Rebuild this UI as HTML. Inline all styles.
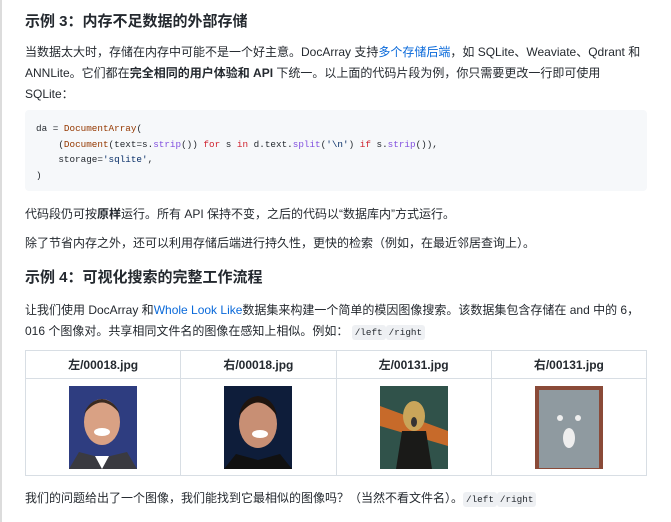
<!DOCTYPE html>
<html><head><meta charset="utf-8"><style>
*{margin:0;padding:0;box-sizing:border-box}
body{width:671px;height:522px;overflow:hidden;background:#fff;font-family:"Liberation Sans","Noto Sans CJK SC",sans-serif;color:#24292f;position:relative}
.bar{position:absolute;left:0;top:0;width:2px;height:522px;background:#dcdcdc}
h2{font-size:15px;font-weight:bold;position:absolute;left:25px;line-height:22px}
p{font-size:12px;line-height:21px;position:absolute;left:25px;white-space:nowrap}
a{color:#0969da;text-decoration:none}
.code{position:absolute;left:25px;top:110px;width:622px;height:81px;background:#f6f8fa;border-radius:4px;font-family:"Liberation Mono",monospace;font-size:9.3px;line-height:15.5px;padding:11px 0 0 11px;white-space:pre;color:#24292f}
.k{color:#cf222e}.f{color:#8250df}.n{color:#953800}.s{color:#0a3069}
code{font-family:"Liberation Mono",monospace;font-size:9.3px;background:#eef0f3;border-radius:3px;padding:2px 3px}
table{position:absolute;left:25px;top:350px;width:622px;border-collapse:collapse}
td,th{border:1px solid #d8dee4;text-align:center;font-size:12px}
th{height:28px;font-weight:600}
td{height:97px;vertical-align:middle}
td svg{display:block;margin:0 auto}
</style></head><body>
<div class="bar"></div>
<h2 style="top:11px">示例 3：内存不足数据的外部存储</h2>
<p style="top:42px">当数据太大时，存储在内存中可能不是一个好主意。DocArray 支持<a>多个存储后端</a>，如 SQLite、Weaviate、Qdrant 和<br>ANNLite。它们都在<b>完全相同的用户体验和 API</b> 下统一。以上面的代码片段为例，你只需要更改一行即可使用<br>SQLite：</p>
<div class="code">da = <span class="n">DocumentArray</span>(
    (<span class="n">Document</span>(text=s.<span class="f">strip</span>()) <span class="k">for</span> s <span class="k">in</span> d.text.<span class="f">split</span>(<span class="s">'\n'</span>) <span class="k">if</span> s.<span class="f">strip</span>()),
    storage=<span class="s">'sqlite'</span>,
)</div>
<p style="top:204px">代码段仍可按<b>原样</b>运行。所有 API 保持不变，之后的代码以“数据库内”方式运行。</p>
<p style="top:233px">除了节省内存之外，还可以利用存储后端进行持久性，更快的检索（例如，在最近邻居查询上）。</p>
<h2 style="top:267px">示例 4：可视化搜索的完整工作流程</h2>
<p style="top:300px">让我们使用 DocArray 和<a>Whole Look Like</a>数据集来构建一个简单的模因图像搜索。该数据集包含存储在 and 中的 6，<br>016 个图像对。共享相同文件名的图像在感知上相似。例如： <code>/left</code><code>/right</code></p>
<table><tr><th>左/00018.jpg</th><th>右/00018.jpg</th><th>左/00131.jpg</th><th>右/00131.jpg</th></tr>
<tr>
<td><svg width="68" height="83"><rect width="68" height="83" fill="#2e3d80"/><ellipse cx="33" cy="36" rx="18" ry="23" fill="#d9a184"/><path d="M15 28 Q33 5 51 28 Q45 14 33 13 Q20 14 15 28Z" fill="#3a2a20"/><path d="M0 83 L10 66 L33 72 L58 66 L68 83Z" fill="#3a3a40"/><path d="M26 70 L33 83 L40 70Z" fill="#fff"/><ellipse cx="33" cy="46" rx="8" ry="4" fill="#fff"/></svg></td>
<td><svg width="68" height="83"><rect width="68" height="83" fill="#0e1d3a"/><ellipse cx="34" cy="38" rx="19" ry="24" fill="#c88f74"/><path d="M15 30 Q34 3 53 30 Q50 12 34 10 Q18 12 15 30Z" fill="#1e140e"/><path d="M0 83 L12 68 L34 74 L56 68 L68 83Z" fill="#111"/><ellipse cx="36" cy="48" rx="8" ry="4" fill="#fff"/></svg></td>
<td><svg width="68" height="83"><rect width="68" height="83" fill="#30524a"/><path d="M0 20 L68 45 L68 60 L0 40Z" fill="#c76a2a"/><ellipse cx="34" cy="30" rx="11" ry="15" fill="#c9a55a"/><path d="M22 45 L46 45 L52 83 L16 83Z" fill="#1a1a18"/><ellipse cx="34" cy="36" rx="3" ry="5" fill="#333"/></svg></td>
<td><svg width="68" height="83"><rect width="68" height="83" fill="#8a4a38"/><rect x="4" y="4" width="60" height="78" fill="#8f9aa0"/><ellipse cx="34" cy="52" rx="6" ry="10" fill="#eee"/><circle cx="25" cy="32" r="3" fill="#eee"/><circle cx="43" cy="32" r="3" fill="#eee"/></svg></td>
</tr></table>
<p style="top:488px">我们的问题给出了一个图像，我们能找到它最相似的图像吗？（当然不看文件名）。<code>/left</code><code>/right</code></p>
</body></html>
